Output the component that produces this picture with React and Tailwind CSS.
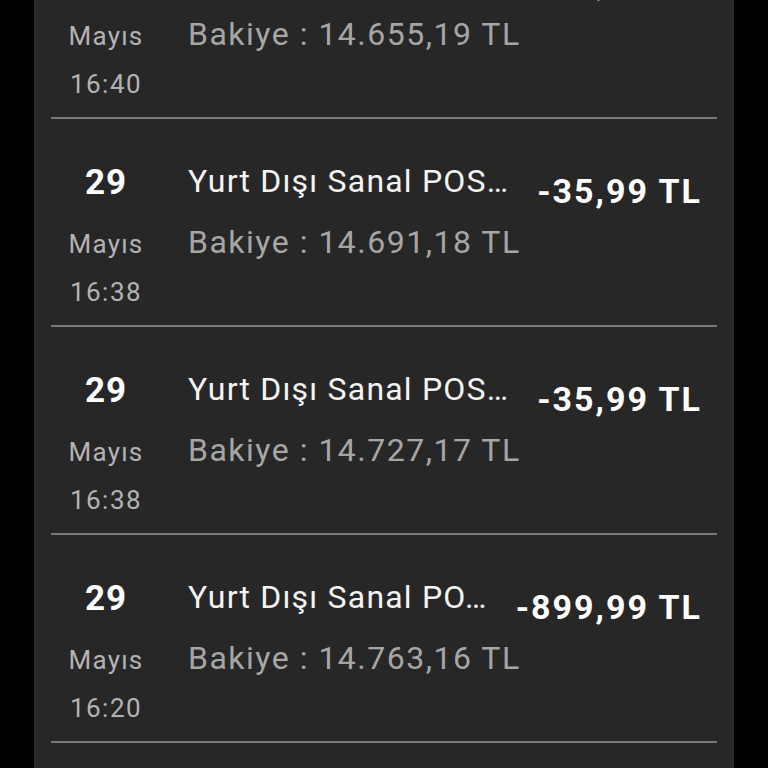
import React from "react";

const rows = [
  { day: "29", month: "Mayıs", time: "16:40", title: "Yurt Dışı Sanal POS…", balance: "14.655,19 TL", amount: "-35,99 TL" },
  { day: "29", month: "Mayıs", time: "16:38", title: "Yurt Dışı Sanal POS…", balance: "14.691,18 TL", amount: "-35,99 TL" },
  { day: "29", month: "Mayıs", time: "16:38", title: "Yurt Dışı Sanal POS…", balance: "14.727,17 TL", amount: "-35,99 TL" },
  { day: "29", month: "Mayıs", time: "16:20", title: "Yurt Dışı Sanal PO…", balance: "14.763,16 TL", amount: "-899,99 TL" },
  { day: "29", month: "Mayıs", time: "16:12", title: "Yurt Dışı Sanal POS…", balance: "15.663,15 TL", amount: "-35,99 TL" },
];

// Single transaction row
const TxRow = ({ tx }) => (
  <div className="flex h-[208px] pt-[42px] border-b-2 border-[#7a7a7a]">
    <div className="w-[110px] shrink-0 flex flex-col items-center">
      <span className="mt-[2px] leading-[40px] text-[35px] tracking-[1px] font-bold text-white">{tx.day}</span>
      <span className="mt-[17px] leading-[48px] text-[26px] tracking-[1.2px] text-[#b3b3b3]">{tx.month}</span>
      <span className="leading-[48px] text-[26px] tracking-[1.5px] text-[#b3b3b3]">{tx.time}</span>
    </div>
    <div className="ml-[27px] flex-1 min-w-0 pr-[15px]">
      <div className="flex justify-between items-start">
        <span className="leading-[40px] text-[32px] tracking-[1.2px] text-[#f4f4f4] whitespace-nowrap">{tx.title}</span>
        <span className="mt-[10px] leading-[40px] text-[34px] tracking-[2px] font-bold text-white whitespace-nowrap">{tx.amount}</span>
      </div>
      <div className="mt-[11px] leading-[40px] text-[32px] tracking-[1.5px] text-[#a6a6a6] whitespace-nowrap">
        Bakiye : {tx.balance}
      </div>
    </div>
  </div>
);

export default function App() {
  return (
    <div className="h-[768px] overflow-hidden bg-black" style={{ fontFamily: "Roboto, 'Noto Sans', sans-serif" }}>
      <div className="mx-auto w-[700px] h-full bg-[#272727] px-[17px] overflow-hidden">
        <div className="-mt-[89px]">
          {rows.map((tx, i) => (
            <TxRow key={i} tx={tx} />
          ))}
        </div>
      </div>
    </div>
  );
}
